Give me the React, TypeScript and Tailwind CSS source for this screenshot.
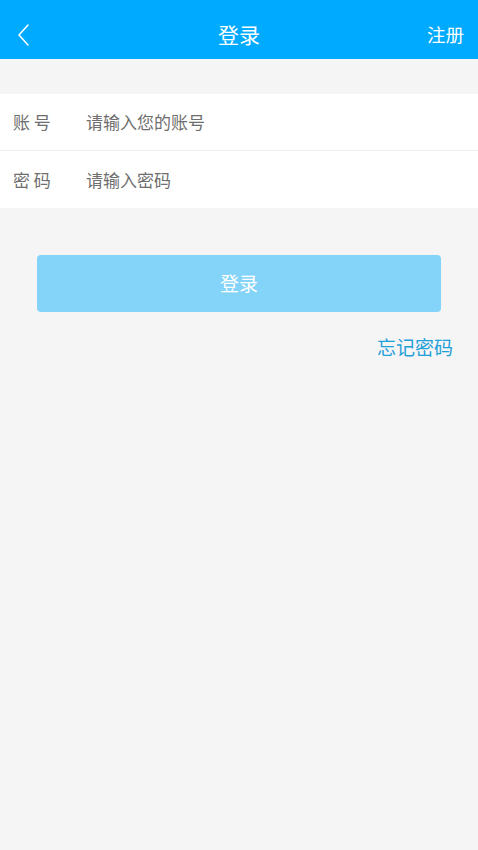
import React from 'react';

const font = { fontFamily: '"Noto Sans CJK SC", "Noto Sans", sans-serif' };

const App: React.FC = () => {
  return (
    <div className="min-h-[850px] w-full bg-[#f5f5f5]" style={font}>
      {/* header */}
      <div className="flex h-[59px] items-center justify-between bg-[#00aaff] px-[14px] pt-[10px]">
        <button className="flex h-[40px] w-[40px] items-center pl-[2px]">
          <svg width="14" height="24" viewBox="0 0 14 24" fill="none">
            <path d="M12 2 L3 12 L12 22" stroke="white" strokeWidth="1.5" strokeLinecap="round" strokeLinejoin="round" />
          </svg>
        </button>
        <h1 className="text-[21px] text-white">登录</h1>
        <span className="w-[40px] text-right text-[18.5px] whitespace-nowrap text-white">注册</span>
      </div>

      {/* form */}
      <div className="mt-[35px] bg-white">
        <div className="flex h-[57px] items-center border-b border-[#eeeeee] pl-[13px]">
          <span className="w-[73px] text-[17px] text-[#6e6e6e]">账 号</span>
          <span className="text-[17px] text-[#6e6e6e]">请输入您的账号</span>
        </div>
        <div className="flex h-[57px] items-center pl-[13px]">
          <span className="w-[73px] text-[17px] text-[#6e6e6e]">密 码</span>
          <span className="text-[17px] text-[#6e6e6e]">请输入密码</span>
        </div>
      </div>

      <div className="px-[37px] pt-[47px]">
        <button className="flex h-[57px] w-full items-center justify-center rounded-[4px] bg-[#84d3f9] text-[19px] text-white">
          登录
        </button>
        <div className="mt-[21px] flex justify-end">
          <span className="mr-[-12px] text-[19px] text-[#1fa0d8]">忘记密码</span>
        </div>
      </div>
    </div>
  );
};

export default App;
